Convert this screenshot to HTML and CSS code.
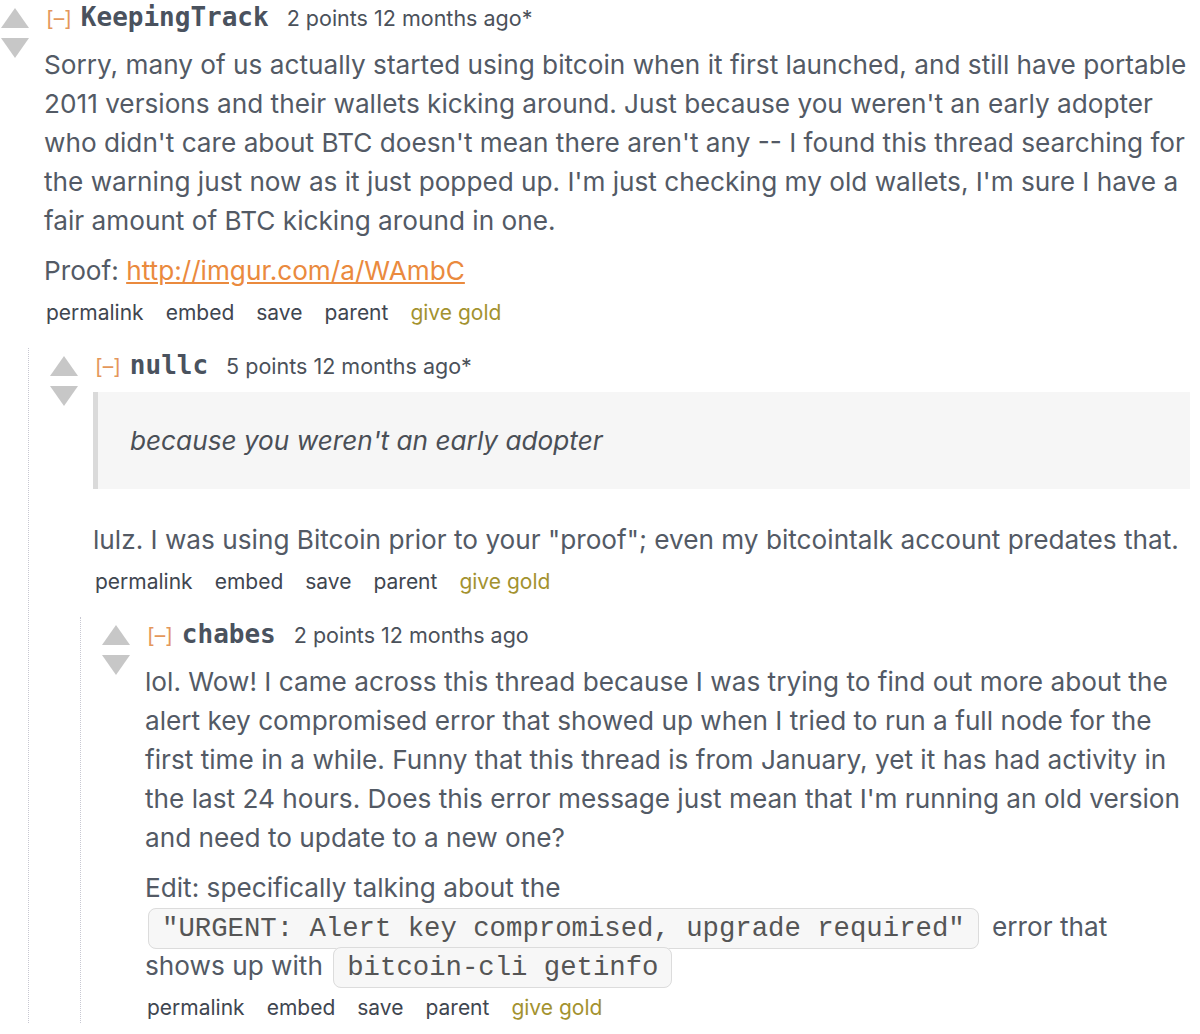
FILE: index.html
```html
<!DOCTYPE html>
<html lang="en">
<head>
    <meta charset="UTF-8">
    <title>Comments</title>
    <link rel="stylesheet" href="styles.css">
</head>
<body>
    <div class="comment">
        <div class="main">
            <div class="votes">
                <span class="arrow up"></span>
                <span class="arrow down"></span>
            </div>
            <div class="entry">
                <div class="tagline">
                    <span class="expand">[&ndash;]</span>
                    <span class="author">KeepingTrack</span>
                    <span class="meta">2 points 12 months ago*</span>
                </div>
                <div class="md">
                    <p>Sorry, many of us actually started using bitcoin when it first launched, and still have portable 2011 versions and their wallets kicking around. Just because you weren't an early adopter who didn't care about BTC doesn't mean there aren't any -- I found this thread searching for the warning just now as it just popped up. I'm just checking my old wallets, I'm sure I have a fair amount of BTC kicking around in one.</p>
                    <p>Proof: <a href="#">http://imgur.com/a/WAmbC</a></p>
                </div>
                <ul class="buttons">
                    <li>permalink</li>
                    <li>embed</li>
                    <li>save</li>
                    <li>parent</li>
                    <li class="gold">give gold</li>
                </ul>
            </div>
        </div>

        <div class="child">
            <div class="comment">
                <div class="main">
                    <div class="votes">
                        <span class="arrow up"></span>
                        <span class="arrow down"></span>
                    </div>
                    <div class="entry">
                        <div class="tagline">
                            <span class="expand">[&ndash;]</span>
                            <span class="author">nullc</span>
                            <span class="meta">5 points 12 months ago*</span>
                        </div>
                        <div class="md">
                            <blockquote><p>because you weren't an early adopter</p></blockquote>
                            <p class="after-quote">lulz. I was using Bitcoin prior to your "proof"; even my bitcointalk account predates that.</p>
                        </div>
                        <ul class="buttons">
                            <li>permalink</li>
                            <li>embed</li>
                            <li>save</li>
                            <li>parent</li>
                            <li class="gold">give gold</li>
                        </ul>
                    </div>
                </div>

                <div class="child">
                    <div class="comment">
                        <div class="main">
                            <div class="votes">
                                <span class="arrow up"></span>
                                <span class="arrow down"></span>
                            </div>
                            <div class="entry">
                                <div class="tagline">
                                    <span class="expand">[&ndash;]</span>
                                    <span class="author">chabes</span>
                                    <span class="meta">2 points 12 months ago</span>
                                </div>
                                <div class="md">
                                    <p>lol. Wow! I came across this thread because I was trying to find out more about the alert key compromised error that showed up when I tried to run a full node for the first time in a while. Funny that this thread is from January, yet it has had activity in the last 24 hours. Does this error message just mean that I'm running an old version and need to update to a new one?</p>
                                    <p>Edit: specifically talking about the <code>"URGENT: Alert key compromised, upgrade required"</code> error that shows up with <code>bitcoin-cli getinfo</code></p>
                                </div>
                                <ul class="buttons">
                                    <li>permalink</li>
                                    <li>embed</li>
                                    <li>save</li>
                                    <li>parent</li>
                                    <li class="gold">give gold</li>
                                </ul>
                            </div>
                        </div>
                    </div>
                </div>
            </div>
        </div>
    </div>
</body>
</html>
```

FILE: styles.css
```css
body {
    margin: 0;
    background: #fff;
    font-family: Inter, "Liberation Sans", Arial, sans-serif;
    color: #535a65;
    width: 1200px;
    height: 1034px;
    overflow: hidden;
}

.main {
    display: flex;
}

.votes {
    width: 30px;
    flex-shrink: 0;
    display: flex;
    flex-direction: column;
    align-items: center;
    gap: 10px;
    padding-top: 8px;
}

.arrow {
    width: 0;
    height: 0;
    border-left: 14px solid transparent;
    border-right: 14px solid transparent;
}

.arrow.up {
    border-bottom: 20px solid #c7c7c7;
}

.arrow.down {
    border-top: 20px solid #c7c7c7;
}

.entry {
    flex: 1;
    margin-left: 14px;
    margin-right: 10px;
}

.tagline {
    height: 34px;
    line-height: 34px;
    display: flex;
    align-items: baseline;
    white-space: nowrap;
}

.expand {
    color: #e4975b;
    font-size: 21px;
    margin-left: 2px;
    margin-right: 9px;
}

.author {
    font-family: "DejaVu Sans Mono", monospace;
    font-weight: bold;
    font-size: 26px;
    color: #4a525e;
    margin-right: 18px;
}

.meta {
    font-size: 21.5px;
    color: #4b515a;
}

.md {
    font-size: 26.2px;
    line-height: 39px;
}

.md p {
    margin: 11px 0 0;
}

.md a {
    color: #ea8a3e;
    text-decoration: underline;
}

.md blockquote {
    margin: 10px 0 0;
    padding: 29px 0 29px 32px;
    background: #f6f6f6;
    border-left: 5px solid #dadada;
    font-style: italic;
    color: #4a4f56;
}

.md blockquote p {
    margin: 0;
}

.md .after-quote {
    margin-top: 31px;
}

.md code {
    font-family: "Liberation Mono", "Courier New", monospace;
    font-size: 27.3px;
    line-height: 1;
    white-space: nowrap;
    background: #f7f7f7;
    border: 1px solid #dcdcdc;
    border-radius: 8px;
    padding: 4px 13px;
    margin: 0 6px 0 3px;
    color: #555;
}

.buttons {
    list-style: none;
    margin: 8px 0 0;
    padding: 0 0 0 2px;
    display: flex;
    gap: 22px;
    font-size: 21px;
    line-height: 30px;
    color: #3f4650;
}

.buttons .gold {
    color: #a3922f;
}

.child {
    margin-top: 20px;
    margin-left: 28px;
    padding-left: 20px;
    border-left: 1px dotted #c8c8d2;
}

.child .child {
    margin-left: 31px;
}
```
